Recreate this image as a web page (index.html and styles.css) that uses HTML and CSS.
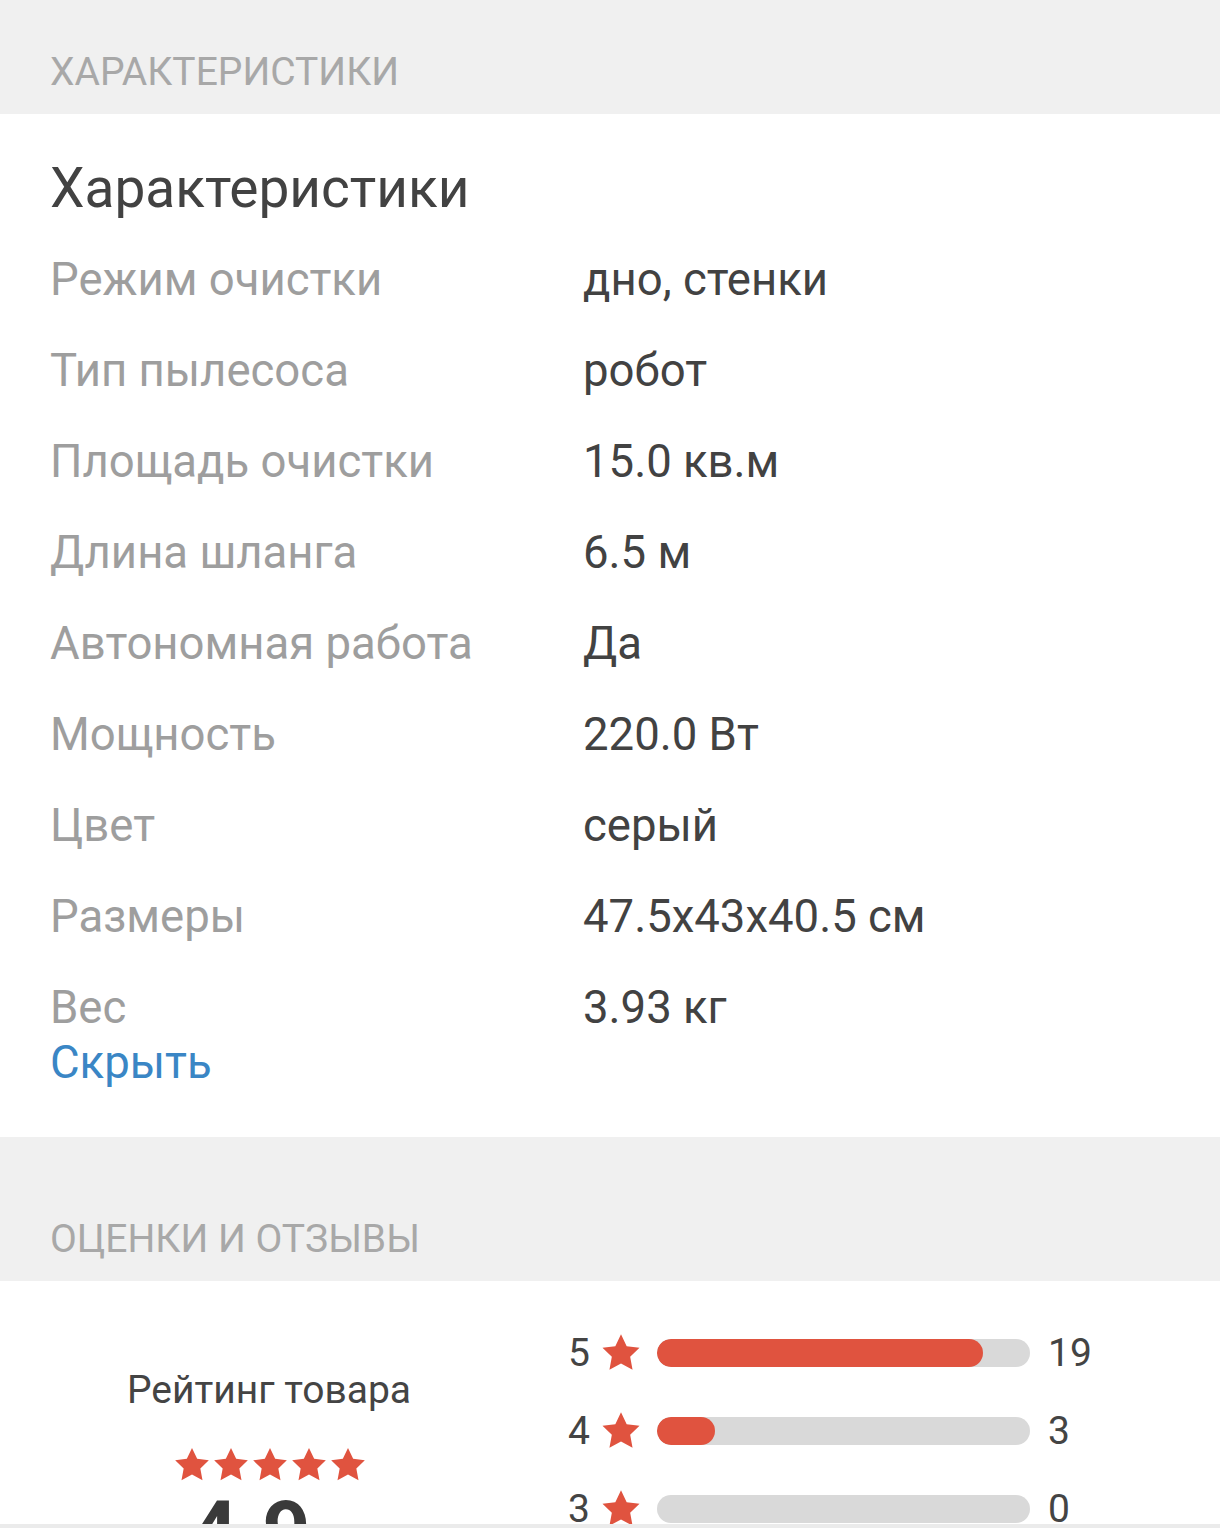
FILE: index.html
```html
<!DOCTYPE html>
<html lang="ru">
<head>
<meta charset="utf-8">
<title>Характеристики</title>
<link rel="stylesheet" href="styles.css">
</head>
<body>
<div class="band band-first"><span class="band-title">ХАРАКТЕРИСТИКИ</span></div>
<section class="specs">
  <h2 class="specs-title">Характеристики</h2>
  <div class="spec-list">
    <div class="spec-label">Режим очистки</div><div class="spec-value">дно, стенки</div>
    <div class="spec-label">Тип пылесоса</div><div class="spec-value">робот</div>
    <div class="spec-label">Площадь очистки</div><div class="spec-value">15.0 кв.м</div>
    <div class="spec-label">Длина шланга</div><div class="spec-value">6.5 м</div>
    <div class="spec-label">Автономная работа</div><div class="spec-value">Да</div>
    <div class="spec-label">Мощность</div><div class="spec-value">220.0 Вт</div>
    <div class="spec-label">Цвет</div><div class="spec-value">серый</div>
    <div class="spec-label">Размеры</div><div class="spec-value">47.5x43x40.5 см</div>
    <div class="spec-label">Вес</div><div class="spec-value">3.93 кг</div>
  </div>
  <a class="hide-link" href="#">Скрыть</a>
</section>
<div class="band band-second"><span class="band-title">ОЦЕНКИ И ОТЗЫВЫ</span></div>
<section class="ratings">
  <div class="rating-summary">
    <div class="rating-caption">Рейтинг товара</div>
    <div class="rating-stars">
      <svg class="star-big" viewBox="0 0 24 24"><path d="M12 1.8l3.1 6.5 7 .9-5.1 4.9 1.3 7L12 17.7l-6.3 3.4 1.3-7L1.9 9.2l7-.9z"/></svg>
      <svg class="star-big" viewBox="0 0 24 24"><path d="M12 1.8l3.1 6.5 7 .9-5.1 4.9 1.3 7L12 17.7l-6.3 3.4 1.3-7L1.9 9.2l7-.9z"/></svg>
      <svg class="star-big" viewBox="0 0 24 24"><path d="M12 1.8l3.1 6.5 7 .9-5.1 4.9 1.3 7L12 17.7l-6.3 3.4 1.3-7L1.9 9.2l7-.9z"/></svg>
      <svg class="star-big" viewBox="0 0 24 24"><path d="M12 1.8l3.1 6.5 7 .9-5.1 4.9 1.3 7L12 17.7l-6.3 3.4 1.3-7L1.9 9.2l7-.9z"/></svg>
      <svg class="star-big" viewBox="0 0 24 24"><path d="M12 1.8l3.1 6.5 7 .9-5.1 4.9 1.3 7L12 17.7l-6.3 3.4 1.3-7L1.9 9.2l7-.9z"/></svg>
    </div>
    <div class="rating-value">4.9</div>
  </div>
  <div class="rating-bars">
    <div class="bar-row">
      <span class="bar-num">5</span>
      <svg class="star-small" viewBox="0 0 24 24"><path d="M12 1.8l3.1 6.5 7 .9-5.1 4.9 1.3 7L12 17.7l-6.3 3.4 1.3-7L1.9 9.2l7-.9z"/></svg>
      <div class="bar"><div class="bar-fill" style="width: 87.5%"></div></div>
      <span class="bar-count">19</span>
    </div>
    <div class="bar-row">
      <span class="bar-num">4</span>
      <svg class="star-small" viewBox="0 0 24 24"><path d="M12 1.8l3.1 6.5 7 .9-5.1 4.9 1.3 7L12 17.7l-6.3 3.4 1.3-7L1.9 9.2l7-.9z"/></svg>
      <div class="bar"><div class="bar-fill" style="width: 15.5%"></div></div>
      <span class="bar-count">3</span>
    </div>
    <div class="bar-row">
      <span class="bar-num">3</span>
      <svg class="star-small" viewBox="0 0 24 24"><path d="M12 1.8l3.1 6.5 7 .9-5.1 4.9 1.3 7L12 17.7l-6.3 3.4 1.3-7L1.9 9.2l7-.9z"/></svg>
      <div class="bar"><div class="bar-fill" style="width: 0%"></div></div>
      <span class="bar-count">0</span>
    </div>
  </div>
</section>
<div class="bottom-bar"></div>
</body>
</html>
```

FILE: styles.css
```css
* { box-sizing: border-box; }
html, body {
  margin: 0;
  padding: 0;
  background: #ffffff;
  font-family: Roboto, "Noto Sans", "DejaVu Sans", sans-serif;
  width: 1220px;
  overflow: hidden;
}
.band {
  background: #f0f0f0;
  padding: 0 50px 18px;
}
.band-first { padding-top: 48px; height: 114px; }
.band-second { padding-top: 78px; height: 144px; }
.band-title {
  display: block;
  font-size: 39px;
  line-height: 48px;
  color: #a8a8a8;
}
.specs {
  padding: 42px 50px 0;
  height: 1023px;
}
.specs-title {
  margin: 0 0 32px;
  font-weight: 400;
  font-size: 55px;
  line-height: 64px;
  color: #424242;
}
.spec-list {
  display: grid;
  grid-template-columns: 533px 1fr;
  row-gap: 36px;
  font-size: 45.5px;
  line-height: 55px;
}
.spec-label { color: #9e9e9e; }
.spec-value { color: #424242; }
.hide-link {
  display: block;
  font-size: 45.5px;
  line-height: 55px;
  color: #3a86c5;
  text-decoration: none;
}
.ratings {
  height: 243px;
  overflow: hidden;
  display: grid;
  grid-template-columns: 438px 1fr;
  column-gap: 80px;
  padding-left: 50px;
}
.rating-summary {
  padding-top: 86px;
  display: flex;
  flex-direction: column;
  align-items: center;
}
.rating-caption {
  font-size: 39px;
  line-height: 46px;
  color: #444444;
}
.rating-stars {
  margin-top: 34px;
  display: flex;
  gap: 0;
  height: 36px;
}
.star-big { width: 40px; height: 40px; fill: #e0533f; margin-top: -2px; margin-right: -1px; }
.rating-value {
  margin-top: 7px;
  font-size: 84px;
  line-height: 84px;
  font-weight: 700;
  color: #3a3a3a;
  margin-left: -38px;
}
.rating-bars {
  padding-top: 58px;
  display: flex;
  flex-direction: column;
  gap: 50px;
}
.bar-row {
  display: flex;
  align-items: center;
  height: 28px;
}
.bar-num {
  width: 34px;
  font-size: 39px;
  color: #444444;
  line-height: 28px;
}
.star-small { width: 44px; height: 44px; fill: #e0533f; margin-right: 14px; margin-left: -3px; flex: none; }
.bar {
  width: 373px;
  height: 28px;
  border-radius: 14px;
  background: #d9d9d9;
  overflow: hidden;
  flex: none;
}
.bar-fill {
  height: 100%;
  border-radius: 14px;
  background: #e0533f;
}
.bar-count {
  margin-left: 18px;
  font-size: 39px;
  line-height: 28px;
  color: #444444;
}
.bottom-bar {
  height: 10px;
  background: #ebebeb;
}
```
